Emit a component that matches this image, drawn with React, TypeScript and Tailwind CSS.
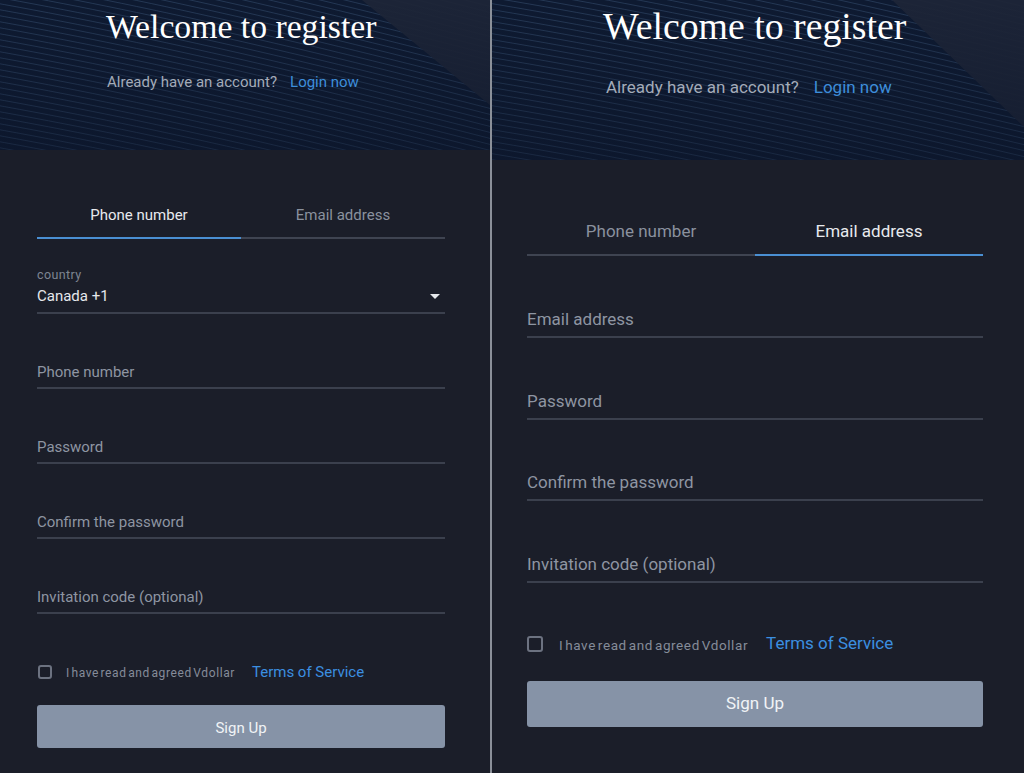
import React from 'react'

type Tab = 'phone' | 'email'

function HeaderArt({ w, h, cut }: { w: number; h: number; cut: [number, number] }) {
  const rows = Array.from({ length: 54 }, (_, i) => -160 + i * 6)
  return (
    <svg className="absolute inset-0" width={w} height={h} viewBox={`0 0 ${w} ${h}`}>
      <defs>
        <linearGradient id={`fade${w}`} x1="0" y1="0" x2="0" y2="1">
          <stop offset="0" stopColor="#0b1428" stopOpacity="0" />
          <stop offset="1" stopColor="#0b1428" stopOpacity="0.45" />
        </linearGradient>
      </defs>
      <rect width={w} height={h} fill="#0e1a31" />
      {rows.map((y) => (
        <path
          key={y}
          d={`M -10 ${y} C ${w * 0.3} ${y + 28}, ${w * 0.6} ${y + 62}, ${w + 10} ${y + 115}`}
          stroke="#55779f"
          strokeOpacity="0.32"
          strokeWidth="1"
          fill="none"
        />
      ))}
      <polygon points={`${cut[0]},0 ${w},0 ${w},${cut[1]}`} fill="#1e2537" fillOpacity="0.94" />
      <rect width={w} height={h} fill={`url(#fade${w})`} />
    </svg>
  )
}

function Field({ label, big, first }: { label: string; big: boolean; first?: boolean }) {
  return (
    <div
      className={`border-b-2 border-[#3b404d] text-[#8e95a2] ${
        big ? 'text-[17px] leading-[22px] pb-[6px]' : 'text-[15px] leading-[20px] pb-[5px]'
      } ${first ? (big ? 'mt-[52px]' : 'mt-[29px]') : big ? 'mt-[51.5px]' : 'mt-[48px]'}`}
    >
      {label}
    </div>
  )
}

function Panel({ big, active }: { big: boolean; active: Tab }) {
  const tabs: { key: Tab; label: string }[] = [
    { key: 'phone', label: 'Phone number' },
    { key: 'email', label: 'Email address' },
  ]

  return (
    <div className={`flex flex-col h-full bg-[#1b1e29] ${big ? 'w-[532px]' : 'w-[490px]'}`}>
      <div className={`relative overflow-hidden shrink-0 ${big ? 'h-[160px]' : 'h-[150px]'}`}>
        <HeaderArt w={big ? 532 : 490} h={big ? 160 : 150} cut={big ? [400, 127] : [362, 105]} />
        <div className="relative">
          <h1
            className={`font-['Liberation_Serif',serif] text-white leading-none whitespace-nowrap ${
              big ? 'text-[37.8px] pt-[8px] pl-[111px]' : 'text-[33.7px] pt-[10px] pl-[106px]'
            }`}
          >
            Welcome to register
          </h1>
          <p
            className={`flex ${
              big ? 'text-[17px] leading-[22px] mt-[30px] pl-[114px] gap-[15px]' : 'text-[15px] leading-[20px] mt-[28px] pl-[107px] gap-[13px]'
            }`}
          >
            <span className="text-[#a3abb9]">Already have an account?</span>
            <span className="text-[#3d8edb]">Login now</span>
          </p>
        </div>
      </div>

      <div className={big ? 'pl-[35px] pr-[41px]' : 'pl-[37px] pr-[45px]'}>
        <div className={`flex ${big ? 'mt-[60px]' : 'mt-[55px]'}`}>
          {tabs.map((t) => (
            <div
              key={t.key}
              className={`flex-1 text-center border-b-2 ${
                big ? 'text-[17px] leading-[22px] pb-[12px]' : 'text-[15px] leading-[20px] pb-[12px]'
              } ${t.key === active ? 'text-[#e8eaee] border-[#4a8fd2]' : 'text-[#8a919e] border-[#3f4451]'}`}
            >
              {t.label}
            </div>
          ))}
        </div>

        {active === 'phone' ? (
          <>
            <div className="mt-[29px] border-b-2 border-[#3b404d] pb-[6px]">
              <div className="text-[12.5px] leading-[14px] tracking-[0.4px] text-[#7e8592]">country</div>
              <div className="mt-[4px] flex items-center justify-between text-[15px] leading-[20px] text-[#e6e8ec]">
                <span>Canada +1</span>
                <span className="mr-[5px] w-0 h-0 border-l-[5px] border-r-[5px] border-t-[5px] border-l-transparent border-r-transparent border-t-[#e6e8ec]" />
              </div>
            </div>
            <Field label="Phone number" big={big} />
          </>
        ) : (
          <Field label="Email address" big={big} first />
        )}
        <Field label="Password" big={big} />
        <Field label="Confirm the password" big={big} />
        <Field label="Invitation code (optional)" big={big} />

        <div className={`flex items-center ${big ? 'mt-[50.5px] h-[22px]' : 'mt-[48px] h-[20px]'}`}>
          <span
            className={`shrink-0 rounded-[3px] border-2 border-[#6c7280] ${big ? 'w-[16px] h-[16px]' : 'w-[14px] h-[14px] ml-[1px]'}`}
          />
          <span
            className={`text-[#858c99] tracking-[0.6px] [word-spacing:-2px] whitespace-nowrap ${
              big ? 'text-[13.5px] ml-[16px] mt-[3px]' : 'text-[12px] ml-[14px] mt-[2px]'
            }`}
          >
            I have read and agreed Vdollar
          </span>
          <span className={`text-[#3b8fe0] whitespace-nowrap ${big ? 'text-[17px] ml-[18px]' : 'text-[15px] ml-[17px]'}`}>
            Terms of Service
          </span>
        </div>

        <button
          className={`w-full rounded-[3px] bg-[#8693a7] text-[#f1f3f6] flex items-center justify-center ${
            big ? 'mt-[26px] h-[46px] text-[17px]' : 'mt-[23px] h-[43px] text-[15px] pt-[3px]'
          }`}
        >
          Sign Up
        </button>
      </div>
    </div>
  )
}

export default function App() {
  return (
    <div className="flex w-[1024px] h-[773px] overflow-hidden bg-[#1b1e29] font-[Roboto,Arial,sans-serif]">
      <Panel big={false} active="phone" />
      <div className="w-[2px] shrink-0 bg-[#8b9099]" />
      <Panel big active="email" />
    </div>
  )
}
